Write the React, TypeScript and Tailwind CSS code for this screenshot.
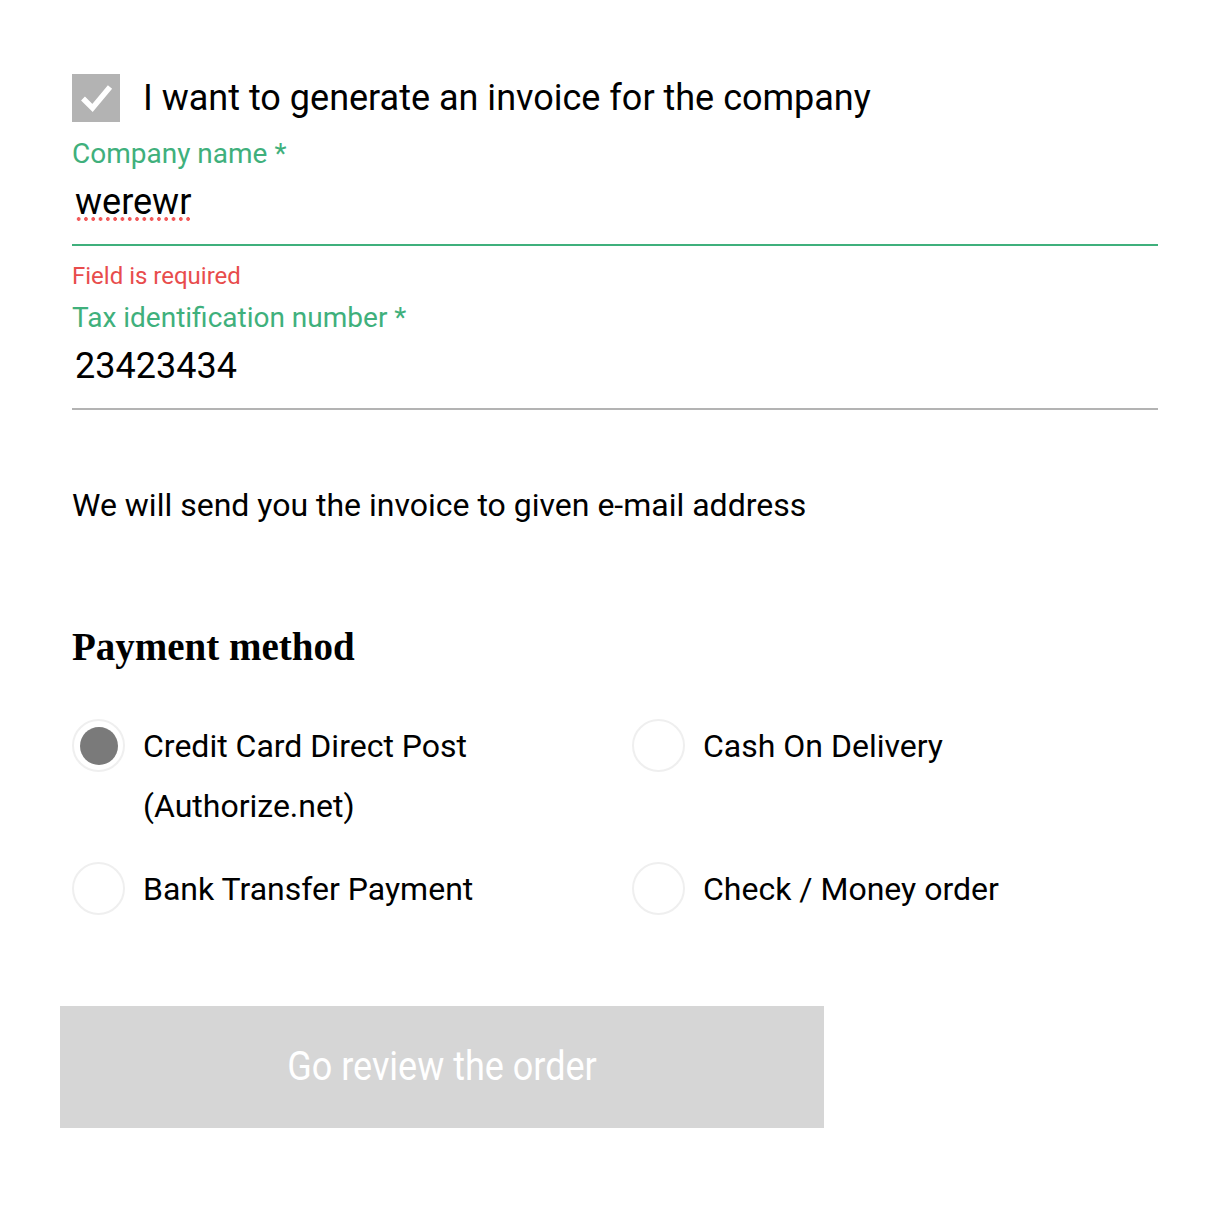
import React, { useState } from 'react';

const methods = [
  { id: 'cc', label: 'Credit Card Direct Post (Authorize.net)' },
  { id: 'cod', label: 'Cash On Delivery' },
  { id: 'bank', label: 'Bank Transfer Payment' },
  { id: 'check', label: 'Check / Money order' },
];

const Radio = ({ checked }: { checked: boolean }) => (
  <span className="flex h-[53px] w-[53px] shrink-0 items-center justify-center rounded-full border-2 border-[#efefef] bg-white">
    {checked && <span className="h-[38px] w-[38px] rounded-full bg-[#7a7a7a]" />}
  </span>
);

const App = () => {
  const [method, setMethod] = useState('cc');

  return (
    <div className="min-h-[1220px] bg-white font-['Roboto',sans-serif] text-black">
      <div className="ml-[72px] w-[1086px] pt-[74px]">
        <label className="flex items-center gap-[23px]">
          <span className="h-[48px] w-[48px] shrink-0 bg-[#b3b3b3]">
            <svg width="48" height="48" viewBox="0 0 48 48" fill="none">
              <path d="M11 24.5l9.5 9.5L38 13" stroke="white" strokeWidth="5.5" />
            </svg>
          </span>
          <span className="text-[36px] leading-[48px]">I want to generate an invoice for the company</span>
        </label>

        <div className="mt-[14px] text-[28px] leading-[36px] text-[#3fb07c]">Company name *</div>
        <div className="pl-[3px] pt-[6px] text-[36px] leading-[48px]">
          {/* spellcheck squiggle */}
          <span className="relative inline-block">
            werewr
            <span className="absolute bottom-[5px] left-0 h-[4px] w-full bg-[radial-gradient(circle,#f25a5a_1.8px,transparent_2.1px)] bg-[length:7.3px_4px] bg-repeat-x" />
          </span>
        </div>
        <div className="mt-[18px] h-[2px] bg-[#3fb07c]" />

        <div className="mt-[14px] text-[24px] leading-[32px] text-[#e84c4c]">Field is required</div>
        <div className="mt-[8px] text-[28px] leading-[36px] text-[#3fb07c]">Tax identification number *</div>
        <div className="pl-[3px] pt-[6px] text-[36px] leading-[48px]">23423434</div>
        <div className="mt-[18px] h-[2px] bg-[#b3b3b3]" />

        <p className="mt-[77px] text-[32px] leading-[36px]">We will send you the invoice to given e-mail address</p>

        <h2 className="mt-[102px] font-['Liberation_Serif',serif] text-[39px] font-bold leading-[44px]">
          Payment method
        </h2>

        <div className="mt-[50px] grid w-[1060px] grid-cols-[560px_1fr] gap-y-[26px]">
          {methods.map((m) => (
            <button
              key={m.id}
              onClick={() => setMethod(m.id)}
              className="flex items-start gap-[18px] text-left"
            >
              <Radio checked={method === m.id} />
              <span className="-mt-[3px] max-w-[360px] text-[32px] leading-[60px]">{m.label}</span>
            </button>
          ))}
        </div>

        <button className="-ml-[12px] mt-[87px] flex h-[122px] w-[764px] items-center justify-center bg-[#d6d6d6] text-white">
          <span className="inline-block scale-x-[0.9] text-[40px] leading-[48px]">Go review the order</span>
        </button>
      </div>
    </div>
  );
};

export default App;
